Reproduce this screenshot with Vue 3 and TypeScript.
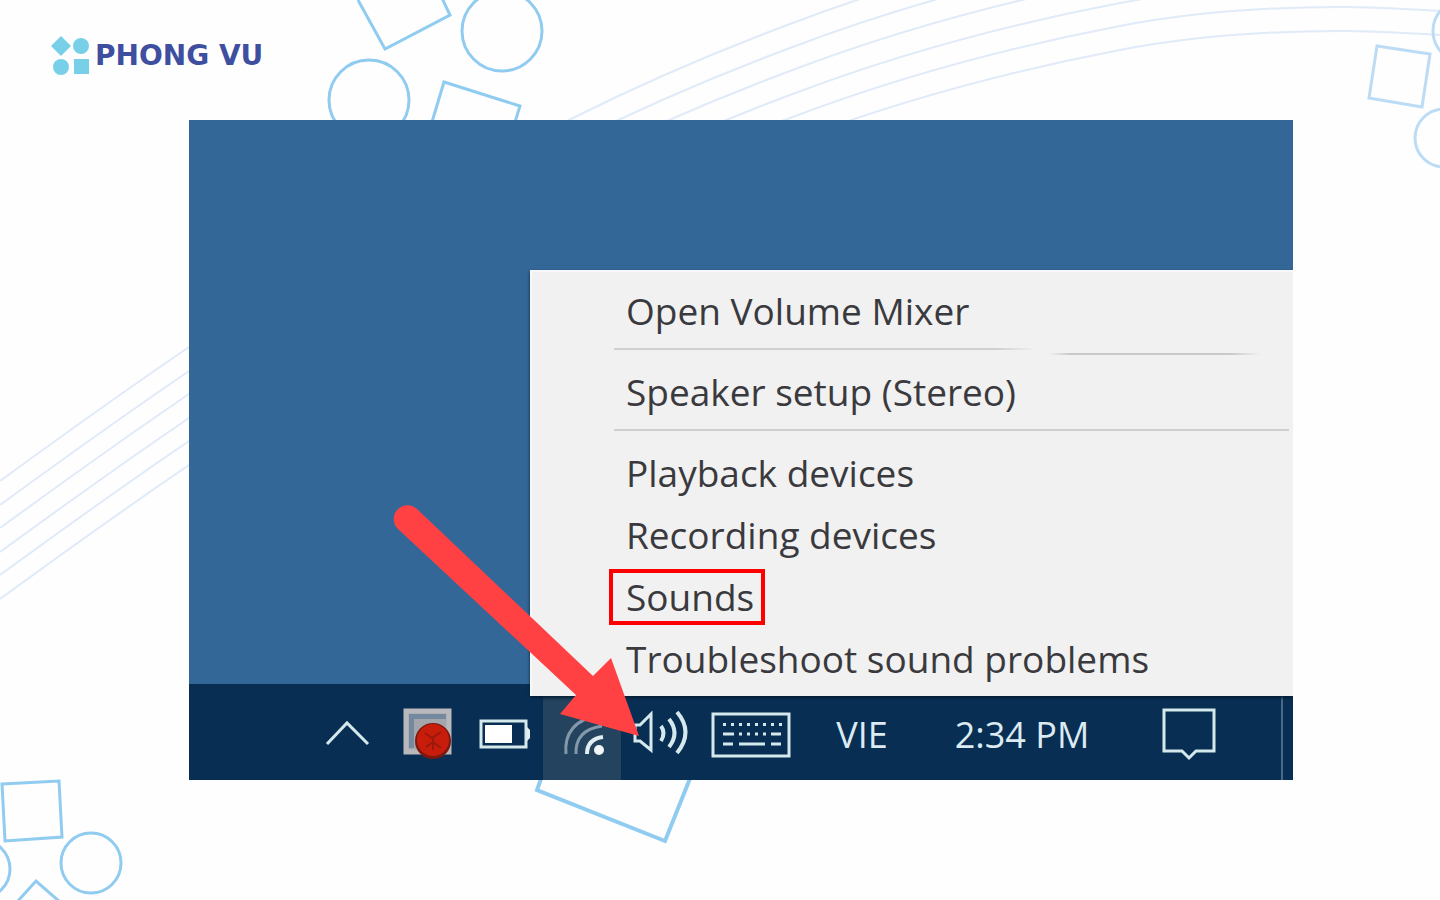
<script setup lang="ts">
interface MenuEntry {
  label: string
  marked?: boolean
}

const groups: MenuEntry[][] = [
  [{ label: 'Open Volume Mixer' }],
  [{ label: 'Speaker setup (Stereo)' }],
  [
    { label: 'Playback devices' },
    { label: 'Recording devices' },
    { label: 'Sounds', marked: true },
    { label: 'Troubleshoot sound problems' },
  ],
]

const arcOffsets: number[] = [0, 24, 47, 71, 94, 118]
const keyDots: number[] = [14, 22, 30, 38, 46, 54, 62, 70]
</script>

<template>
  <div class="page">
    <svg class="backdrop" viewBox="0 0 1440 900" preserveAspectRatio="xMidYMid slice" aria-hidden="true">
      <g class="arcs">
        <path
          v-for="dy in arcOffsets"
          :key="dy"
          :transform="`translate(0 ${dy})`"
          d="M0 481C63 435 126 390 189 347S445 182 573 118C645 82 718 51 790 24C900 -18 1010 -47 1120 -68C1193 -82 1267 -87 1340 -87C1373 -87 1407 -85 1440 -83"
        />
      </g>
      <g class="shapes">
        <path d="M358 0L385 49L450 15L442 -2" />
        <circle cx="502" cy="31" r="40" />
        <circle cx="369" cy="100" r="40" />
        <path d="M432 122L444 82L520 106L515 122" />
        <path d="M2 784L59 781L62 837L5 841Z" />
        <circle cx="91" cy="863" r="30" />
        <circle cx="-19" cy="869" r="29" />
        <path d="M17 902L36 881L60 902" />
        <path class="bold" d="M542 776L537 790L665 841L691 776" />
      </g>
      <g class="shapes pale">
        <path d="M1377 46L1430 54L1422 107L1369 98Z" />
        <circle cx="1444" cy="138" r="29" />
        <circle cx="1464" cy="31" r="31" />
      </g>
    </svg>

    <header class="brand">
      <svg class="brand-mark" width="40" height="40" viewBox="0 0 40 40" aria-hidden="true">
        <path d="M11 0L21 10L11 20L1 10Z" />
        <circle cx="31" cy="10" r="8" />
        <circle cx="11" cy="31" r="8" />
        <rect x="24" y="23" width="15" height="15" />
      </svg>
      <span class="brand-name">PHONG VU</span>
    </header>

    <main class="screen">
      <div class="desktop"></div>

      <nav class="taskbar" aria-label="Taskbar">
        <button class="tray" type="button" aria-label="Show hidden icons">
          <svg width="80" height="96" viewBox="0 0 80 96"><path class="line" stroke-width="3" d="M19 60L39 39L60 60" /></svg>
        </button>
        <button class="tray" type="button" aria-label="Recorder">
          <svg width="80" height="96" viewBox="0 0 80 96">
            <rect x="18" y="27" width="43" height="41" fill="#a3a6ac" stroke="#b9b8bb" stroke-width="5" />
            <path d="M21 30H58V35H26V64H21Z" fill="#7489a0" />
            <circle cx="45" cy="57" r="18" fill="#7d1710" />
            <circle cx="45" cy="56" r="16" fill="#c91d0c" />
            <path d="M37 49L44 54L53 48M38 63L45 58L53 64M45 54V66" fill="none" stroke="#9a180c" stroke-width="2" />
          </svg>
        </button>
        <button class="tray battery" type="button" aria-label="Battery">
          <svg width="75" height="96" viewBox="0 0 75 96">
            <rect class="line" x="13" y="37" width="45" height="26" stroke-width="3" />
            <rect x="17" y="41" width="27" height="18" fill="#fff" />
            <path d="M59 43L62 46V54L59 57Z" fill="#e4f1f4" />
          </svg>
        </button>
        <button class="tray active" type="button" aria-label="Network">
          <svg width="78" height="96" viewBox="0 0 78 96">
            <circle cx="56" cy="66" r="5" fill="#f1f7f8" />
            <g fill="none">
              <path d="M44 70Q44 55 60 53" stroke="#e2eef2" stroke-width="4" />
              <path d="M33 70Q32 46 59 42" stroke="#8299aa" stroke-width="3" />
              <path d="M23 70Q20 38 56 31" stroke="#8299aa" stroke-width="3" />
            </g>
          </svg>
        </button>
        <button class="tray" type="button" aria-label="Volume">
          <svg width="80" height="96" viewBox="0 0 80 96">
            <path class="line" stroke-width="3" d="M14 41H19L30 30V66L19 57H14Z" />
            <path class="line" stroke-width="4" d="M40 42Q45 49 40 57M48 35Q59 49 48 63M56 28Q73 48 56 69" />
          </svg>
        </button>
        <button class="tray keyboard" type="button" aria-label="Touch keyboard">
          <svg width="100" height="96" viewBox="0 0 100 96">
            <rect class="line" x="12" y="30" width="76" height="42" stroke-width="3" />
            <g transform="translate(8 0)">
              <rect v-for="x in keyDots" :key="x" x="0" y="39" width="3" height="3" :transform="`translate(${x} 0)`" fill="#d5e9ec" />
            </g>
            <path class="line" stroke-width="3" d="M22 50H33M38 50H41M46 50H49M54 50H57M62 50H65M70 50H80M22 60H32M38 60H64M70 60H80" />
          </svg>
        </button>
        <button class="tray lang" type="button">VIE</button>
        <button class="tray clock" type="button">2:34 PM</button>
        <button class="tray action" type="button" aria-label="Action center">
          <svg width="136" height="96" viewBox="0 0 136 96">
            <path class="line" stroke-width="3" d="M43 26H93V67H75L68 74L61 67H43Z" />
          </svg>
        </button>
        <button class="show-desktop" type="button" aria-label="Show desktop"></button>
      </nav>

      <div class="menu" role="menu">
        <template v-for="(group, i) in groups" :key="i">
          <div v-if="i > 0" class="separator" :class="{ broken: i === 1 }" role="separator">
            <span class="rule"></span>
            <span v-if="i === 1" class="rule lower"></span>
          </div>
          <button
            v-for="entry in group"
            :key="entry.label"
            class="entry"
            type="button"
            role="menuitem"
          >
            <span class="entry-label" :class="{ marked: entry.marked }">{{ entry.label }}</span>
          </button>
        </template>
      </div>

      <svg class="pointer" width="255" height="245" viewBox="390 500 255 245" aria-hidden="true">
        <path d="M417 509L593 676L611 658L639 736L560 714L576 695L398 529A13 13 0 0 1 417 509Z" />
      </svg>
    </main>
  </div>
</template>

<style>
body {
  margin: 0;
  background: #fefefe;
}
</style>

<style scoped>
.page {
  position: relative;
  box-sizing: border-box;
  min-height: 100vh;
  padding-bottom: 120px;
  overflow: hidden;
  background: #fefefe;
  font-family: "Open Sans", "Noto Sans", sans-serif;
}

.backdrop {
  position: absolute;
  inset: 0;
  width: 100%;
  height: 100%;
  fill: none;
}

.arcs {
  stroke: #e0eaf8;
  stroke-width: 2;
}

.shapes {
  stroke: #90cbf0;
  stroke-width: 3;
}

.shapes .bold {
  stroke-width: 4;
}

.pale {
  stroke: #bcdcf5;
}

.brand {
  position: relative;
  display: flex;
  align-items: center;
  gap: 5px;
  box-sizing: border-box;
  height: 120px;
  padding: 0 50px 8px;
}

.brand-mark {
  fill: #78d0e8;
}

.brand-name {
  color: #3e4fa0;
  font: bold 28px/40px "DejaVu Sans", sans-serif;
}

.screen {
  position: relative;
  margin: 0 147px 0 189px;
  overflow: hidden;
}

.desktop {
  height: 564px;
  background: #336797;
}

.taskbar {
  display: flex;
  justify-content: flex-end;
  height: 96px;
  background: #082f53;
}

button {
  margin: 0;
  padding: 0;
  border: 0;
  background: none;
  color: inherit;
  font: inherit;
}

.tray {
  flex: none;
  width: 80px;
  color: #dcebf2;
  font-size: 36px;
}

.tray svg {
  display: block;
}

.line {
  fill: none;
  stroke: #d5e9ec;
}

.battery {
  width: 75px;
}

.active {
  width: 78px;
  background: #24435f;
}

.keyboard {
  width: 100px;
}

.lang {
  width: 122px;
  padding-top: 4px;
}

.clock {
  width: 198px;
  padding-top: 4px;
}

.action {
  width: 136px;
}

.show-desktop {
  width: 12px;
  margin-left: 24px;
  border-left: 2px solid #48698a;
}

.menu {
  position: absolute;
  right: 0;
  bottom: 84px;
  display: flex;
  flex-direction: column;
  box-sizing: border-box;
  width: 763px;
  padding: 8px 0 6px;
  border-top: 2px solid #f8f8fa;
  border-left: 2px solid #f8f8fa;
  background: #f1f1f1;
  box-shadow: 0 2px 3px #041e35;
}

.entry {
  display: flex;
  align-items: center;
  height: 62px;
  padding-left: 77px;
  color: #3a3a3e;
  font-size: 37px;
  line-height: 48px;
  text-align: left;
  white-space: nowrap;
}

.entry-label {
  padding: 0 7px 0 13px;
  border: 4px solid transparent;
}

.marked {
  border-color: #fe0000;
}

.separator {
  display: flex;
  gap: 12px;
  height: 19px;
  box-sizing: border-box;
  padding: 6px 4px 0 82px;
}

.rule {
  flex: 1;
  height: 2px;
  background: #cfcfcf;
}

.broken {
  padding-right: 32px;
}

.broken .rule {
  flex: 2;
  background: linear-gradient(90deg, #cfcfcf 90%, #f1f1f1);
}

.broken .lower {
  flex: 1;
  margin-top: 5px;
  background: linear-gradient(90deg, #f1f1f1, #c8c8c8 10%, #c8c8c8 85%, #f1f1f1);
}

.pointer {
  position: absolute;
  right: 648px;
  bottom: 35px;
  fill: #ff4144;
  pointer-events: none;
}
</style>
